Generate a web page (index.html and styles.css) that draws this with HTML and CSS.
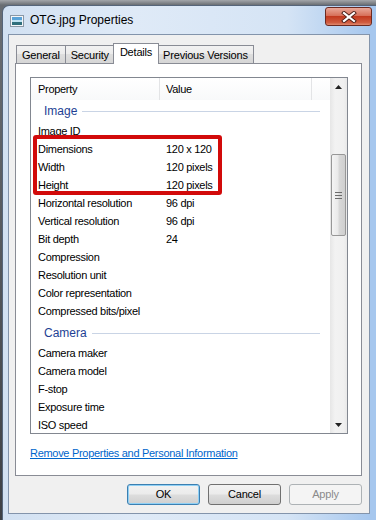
FILE: index.html
```html
<html>

<head>
	<link rel="stylesheet" href="styles.css">
</head>

<body>
	<div class="screen">
		<div class="window">
			<div class="titlebar">
				<svg class="win-icon" width="14" height="12" viewBox="0 0 14 12">
					<rect x="0.5" y="0.5" width="13" height="11" fill="#f4f6f8" stroke="#8a98a6" />
					<rect x="2" y="2" width="10" height="8" fill="#5aa3d8" />
					<rect x="2" y="5" width="10" height="2" fill="#bfe2f2" />
					<rect x="2" y="7" width="10" height="3" fill="#2f6f7c" />
				</svg>
				<span class="title">OTG.jpg Properties</span>
				<div class="close-btn">
					<svg width="16" height="12" viewBox="0 0 16 12">
						<path d="M3 2 L13 10 M13 2 L3 10" stroke="#4a1d16" stroke-width="4" stroke-linecap="square" />
						<path d="M3 2 L13 10 M13 2 L3 10" stroke="#ffffff" stroke-width="2.2" stroke-linecap="square" />
					</svg>
				</div>
			</div>

			<div class="client">
				<div class="tabs">
					<div class="tab">General</div>
					<div class="tab">Security</div>
					<div class="tab selected">Details</div>
					<div class="tab">Previous Versions</div>
				</div>

				<div class="panel">
					<div class="listbox">
						<div class="list-main">
							<div class="list-header">
								<div class="hcell col-name">Property</div>
								<div class="hcell col-value">Value</div>
								<div class="hcell col-rest"></div>
							</div>

							<div class="group">Image</div>
							<div class="row"><span>Image ID</span><span></span></div>
							<div class="highlight">
								<div class="row"><span>Dimensions</span><span>120 x 120</span></div>
								<div class="row"><span>Width</span><span>120 pixels</span></div>
								<div class="row"><span>Height</span><span>120 pixels</span></div>
							</div>
							<div class="row"><span>Horizontal resolution</span><span>96 dpi</span></div>
							<div class="row"><span>Vertical resolution</span><span>96 dpi</span></div>
							<div class="row"><span>Bit depth</span><span>24</span></div>
							<div class="row"><span>Compression</span><span></span></div>
							<div class="row"><span>Resolution unit</span><span></span></div>
							<div class="row"><span>Color representation</span><span></span></div>
							<div class="row"><span>Compressed bits/pixel</span><span></span></div>

							<div class="group second">Camera</div>
							<div class="row"><span>Camera maker</span><span></span></div>
							<div class="row"><span>Camera model</span><span></span></div>
							<div class="row"><span>F-stop</span><span></span></div>
							<div class="row"><span>Exposure time</span><span></span></div>
							<div class="row"><span>ISO speed</span><span></span></div>
						</div>

						<div class="scrollbar">
							<div class="sb-btn">
								<svg width="7" height="4" viewBox="0 0 7 4"><path d="M3.5 0 L7 4 L0 4 Z" fill="#222" /></svg>
							</div>
							<div class="sb-track">
								<div class="sb-thumb">
									<svg width="7" height="7" viewBox="0 0 7 7">
										<path d="M0 0.5 H7 M0 3.5 H7 M0 6.5 H7" stroke="#6b6b6b" stroke-width="1" />
									</svg>
								</div>
							</div>
							<div class="sb-btn">
								<svg width="7" height="4" viewBox="0 0 7 4"><path d="M0 0 L7 0 L3.5 4 Z" fill="#222" /></svg>
							</div>
						</div>
					</div>

					<a class="link" href="#">Remove Properties and Personal Information</a>
				</div>

				<div class="buttons">
					<div class="btn default">OK</div>
					<div class="btn">Cancel</div>
					<div class="btn disabled">Apply</div>
				</div>
			</div>
		</div>
	</div>
</body>

</html>
```

FILE: styles.css
```css
body {
	margin: 0;
	background: #5b5f64;
	font-family: "Liberation Sans", Arial, sans-serif;
	font-size: 11px;
	color: #000;
}

.screen {
	width: 376px;
	height: 520px;
	overflow: hidden;
	background: linear-gradient(#a3a6aa, #6a6e73 5px, #3e4146);
}

.window {
	width: 380px;
	height: 520px;
	margin: 5px 0 0 2px;
	padding-left: 5px;
	box-sizing: border-box;
	border: 1px solid #55657a;
	border-right: none;
	border-radius: 7px 0 0 0;
	background: linear-gradient(to right, #d2e1f2, #dfeaf7 35%, #d5e4f5 75%, #a6c7ee 97%);
}

/* title bar */
.titlebar {
	width: 364px;
	height: 28px;
	display: flex;
	align-items: center;
}

.win-icon {
	margin-left: 2px;
	margin-top: 1px;
}

.title {
	margin-left: 6px;
	font-size: 12px;
	color: #000;
}

.close-btn {
	margin-left: auto;
	align-self: flex-start;
	margin-top: 1px;
	width: 47px;
	height: 19px;
	box-sizing: border-box;
	border: 1px solid #6b2a21;
	border-radius: 3px;
	background: linear-gradient(#e9a899, #d7705a 45%, #c2391f 50%, #cf5b3f 85%, #e08a6f);
	display: flex;
	align-items: center;
	justify-content: center;
}

/* client area */
.client {
	width: 362px;
	height: 480px;
	box-sizing: border-box;
	border: 1px solid #8394ab;
	background: #f0f0f0;
	padding: 8px 0 0 6px;
}

.tabs {
	display: flex;
	align-items: flex-end;
	height: 21px;
	margin-left: 1px;
	margin-bottom: -1px;
}

.tab {
	height: 19px;
	line-height: 18px;
	box-sizing: border-box;
	padding: 0 5px;
	margin-left: -1px;
	border: 1px solid #898c95;
	background: linear-gradient(#f2f2f2, #ebebeb 50%, #dedede 50%, #d6d6d6);
	letter-spacing: -0.2px;
}

.tab:first-child {
	margin-left: 0;
}

.tab.selected {
	position: relative;
	z-index: 1;
	height: 21px;
	line-height: 17px;
	padding: 0 6px;
	margin: 0 -1px 0 -2px;
	border-bottom: none;
	background: #fff;
}

.panel {
	width: 347px;
	height: 413px;
	box-sizing: border-box;
	border: 1px solid #898c95;
	background: #fff;
	padding: 13px 0 0 14px;
}

/* details list */
.listbox {
	width: 318px;
	height: 357px;
	box-sizing: border-box;
	border: 1px solid #828790;
	display: flex;
	overflow: hidden;
}

.list-main {
	flex: 1;
	overflow: hidden;
	letter-spacing: -0.3px;
}

.list-header {
	display: flex;
	height: 22px;
	line-height: 22px;
	background: linear-gradient(#ffffff, #f8f9fa);
}

.hcell {
	box-sizing: border-box;
	border-right: 1px solid #e3e4e6;
}

.col-name {
	width: 129px;
	padding-left: 7px;
}

.col-value {
	width: 152px;
	padding-left: 6px;
}

.col-rest {
	flex: 1;
	border-right: none;
}

.group {
	height: 22px;
	display: flex;
	align-items: center;
	padding: 0 10px 0 13px;
	font-size: 12px;
	letter-spacing: 0;
	color: #1e3f94;
}

.group::after {
	content: "";
	flex: 1;
	height: 1px;
	margin-left: 5px;
	background: #c9d4e5;
}

.group.second {
	margin-top: 2px;
}

.row {
	display: grid;
	grid-template-columns: 128px 1fr;
	height: 18px;
	line-height: 18px;
	padding-left: 7px;
	white-space: nowrap;
}

.highlight {
	position: relative;
}

.highlight::before {
	content: "";
	position: absolute;
	top: -5px;
	left: 2px;
	width: 189px;
	height: 60px;
	box-sizing: border-box;
	border: 4px solid #d20a0a;
	border-radius: 3px;
}

/* scrollbar */
.scrollbar {
	width: 17px;
	display: flex;
	flex-direction: column;
	background: linear-gradient(to right, #e6e6e6, #f2f2f2 30%, #f0f0f0 80%, #e8e8e8);
}

.sb-btn {
	height: 17px;
	display: flex;
	align-items: center;
	justify-content: center;
}

.sb-track {
	flex: 1;
	padding-top: 59px;
}

.sb-thumb {
	width: 15px;
	height: 82px;
	margin-left: 1px;
	box-sizing: border-box;
	border: 1px solid #979797;
	border-radius: 2px;
	background: linear-gradient(to right, #f4f4f4, #e9e9e9 45%, #d8d8d8 55%, #cfcfcf);
	display: flex;
	align-items: center;
	justify-content: center;
}

.link {
	display: block;
	margin-top: 12px;
	line-height: 14px;
	color: #0066cc;
	letter-spacing: -0.3px;
}

/* dialog buttons */
.buttons {
	width: 347px;
	display: flex;
	justify-content: flex-end;
	gap: 8px;
	margin-top: 8px;
}

.btn {
	width: 73px;
	height: 21px;
	line-height: 19px;
	box-sizing: border-box;
	border: 1px solid #707070;
	border-radius: 3px;
	background: linear-gradient(#f2f2f2, #ebebeb 48%, #dddddd 52%, #cfcfcf);
	text-align: center;
	letter-spacing: -0.2px;
}

.btn.default {
	border-color: #3c7fb1;
	box-shadow: inset 0 0 0 1px #8fd0f5;
}

.btn.disabled {
	border-color: #adb2b5;
	background: #f4f4f4;
	color: #8a8a8a;
}
```
